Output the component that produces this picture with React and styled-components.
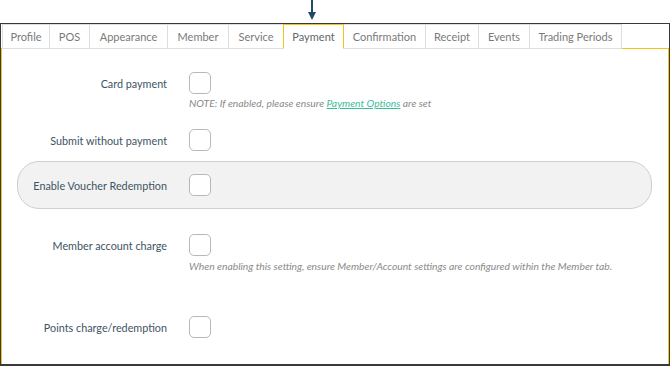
import React from 'react';
import styled, { createGlobalStyle } from 'styled-components';

const GlobalStyle = createGlobalStyle`
  html, body {
    margin: 0;
    padding: 0;
    background: #fff;
  }
  body {
    font-family: Lato, 'Liberation Sans', sans-serif;
  }
`;

const Page = styled.div`
  position: relative;
  width: 670px;
  height: 366px;
  padding-top: 23px;
  box-sizing: border-box;
`;

const Pointer = styled.svg`
  position: absolute;
  left: 307px;
  top: 0;
`;

const Frame = styled.div`
  height: 343px;
  box-sizing: border-box;
  border: 1px solid #3a3a3a;
  border-bottom-width: 2px;
  display: flex;
  flex-direction: column;
`;

const TabBar = styled.div`
  display: flex;
  padding-left: 1px;
  height: 25px;
`;

const Tab = styled.div`
  display: flex;
  align-items: center;
  justify-content: center;
  width: ${(p) => p.w + 1}px;
  font-size: 11px;
  color: ${(p) => (p.active ? '#666' : '#7a7a7a')};
  background: #fff;
  border: 1px solid ${(p) => (p.active ? '#f0c419' : '#dedede')};
  border-bottom: ${(p) => (p.active ? '1px solid #fff' : '1px solid #dedede')};
  margin-left: -1px;
  position: relative;
  z-index: ${(p) => (p.active ? 2 : 1)};
  height: 25px;
  box-sizing: border-box;
  &:first-child {
    margin-left: 0;
  }
`;

const Content = styled.div`
  flex: 1;
  margin-top: -1px;
  border: 1px solid #f0c419;
  border-bottom: none;
  padding: 23px 15px 0;
  display: flex;
  flex-direction: column;
`;

const Setting = styled.div`
  margin-top: ${(p) => p.gap || 0}px;
  display: flex;
  flex-direction: column;
`;

const Field = styled.div`
  display: grid;
  grid-template-columns: 150px 22px 1fr;
  column-gap: 22px;
  align-items: center;
`;

const Highlight = styled.div`
  margin-top: ${(p) => p.gap || 0}px;
  background: #f2f2f2;
  border: 1px solid #cfcfcf;
  border-radius: 22px;
  padding: 12px 0;
  margin-right: 1px;

  & > ${Field} {
    margin-left: -1px;
  }
`;

const Label = styled.span`
  text-align: right;
  font-size: 10.8px;
  color: #3d5464;
  white-space: nowrap;
`;

const Box = styled.span`
  width: 22px;
  height: 22px;
  box-sizing: border-box;
  border: 1px solid #b8b8b8;
  border-radius: 5px;
  background: #fff;
`;

const Note = styled.div`
  margin-top: ${(p) => p.gap || 0}px;
  padding-left: 172px;
  font-size: 10.3px;
  line-height: 12px;
  font-style: italic;
  color: #8a8a8a;
  white-space: nowrap;
`;

const NoteLink = styled.a`
  color: #3bbd9a;
  text-decoration: underline;
`;

const tabs = [
  { name: 'Profile', w: 47 },
  { name: 'POS', w: 40 },
  { name: 'Appearance', w: 78 },
  { name: 'Member', w: 61 },
  { name: 'Service', w: 55 },
  { name: 'Payment', w: 60 },
  { name: 'Confirmation', w: 82 },
  { name: 'Receipt', w: 53 },
  { name: 'Events', w: 51 },
  { name: 'Trading Periods', w: 92 },
];

const App = () => {
  return (
    <Page>
      <GlobalStyle />
      <Pointer width="10" height="22" viewBox="0 0 10 22">
        <rect x="4" y="0" width="2" height="14" fill="#1f4a66" />
        <path d="M1 12 L9 12 L5 20 Z" fill="#1f4a66" />
      </Pointer>
      <Frame>
        <TabBar>
          {tabs.map((t) => (
            <Tab key={t.name} w={t.w} active={t.name === 'Payment'}>
              {t.name}
            </Tab>
          ))}
        </TabBar>
        <Content>
          <Setting>
            <Field>
              <Label>Card payment</Label>
              <Box />
            </Field>
            <Note gap={3}>
              NOTE: If enabled, please ensure <NoteLink>Payment Options</NoteLink> are set
            </Note>
          </Setting>
          <Setting gap={20}>
            <Field>
              <Label>Submit without payment</Label>
              <Box />
            </Field>
          </Setting>
          <Highlight gap={10}>
            <Field>
              <Label>Enable Voucher Redemption</Label>
              <Box />
            </Field>
          </Highlight>
          <Setting gap={25}>
            <Field>
              <Label>Member account charge</Label>
              <Box />
            </Field>
            <Note gap={4}>
              When enabling this setting, ensure Member/Account settings are configured within the Member tab.
            </Note>
          </Setting>
          <Setting gap={44}>
            <Field>
              <Label>Points charge/redemption</Label>
              <Box />
            </Field>
          </Setting>
        </Content>
      </Frame>
    </Page>
  );
};

export default App;
